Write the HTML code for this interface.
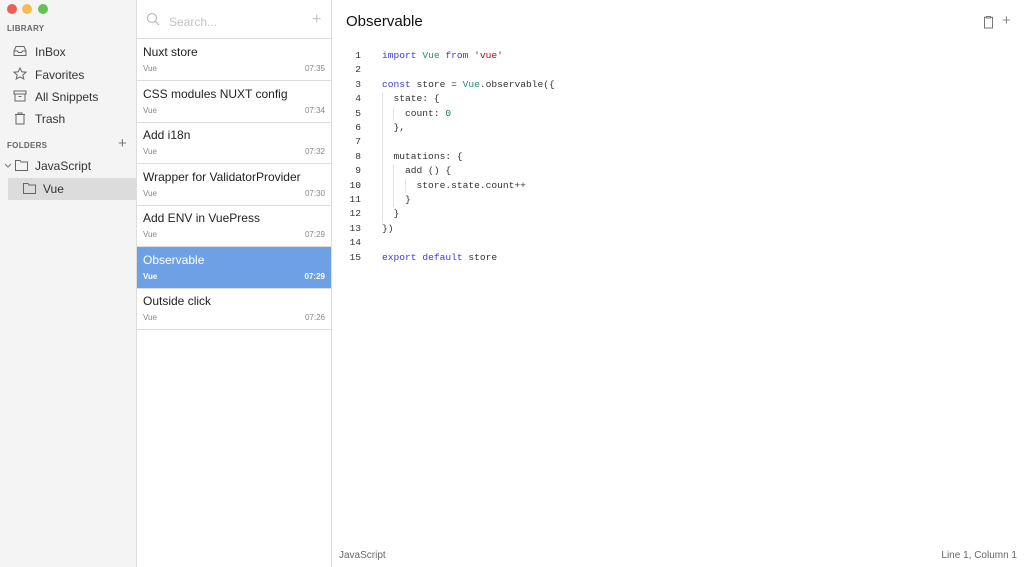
<!DOCTYPE html>
<html><head><meta charset="utf-8"><style>
*{margin:0;padding:0;box-sizing:border-box}
body{width:1024px;height:567px;overflow:hidden;font-family:"Liberation Sans",sans-serif;background:#fff;position:relative;color:#222}
.side{position:absolute;left:0;top:0;width:137px;height:567px;background:#f4f4f4;border-right:1px solid #ddd}
.dot{position:absolute;top:4px;width:10px;height:10px;border-radius:50%}
.lbl{position:absolute;left:7px;font-size:8px;font-weight:bold;color:#666;letter-spacing:.3px}
.nav{position:absolute;left:35px;font-size:12px;color:#333}
.ic{position:absolute;left:13px}
.list{position:absolute;left:137px;top:0;width:195px;height:567px;border-right:1px solid #ddd;background:#fff}
.row{position:absolute;left:0;width:194px;height:42px;border-bottom:1px solid #ddd}
.row .t{position:absolute;left:6px;top:6px;font-size:12px;color:#222}
.row .s{position:absolute;left:6px;top:25px;font-size:8px;color:#888}
.row .m{position:absolute;right:6px;top:25px;font-size:8px;color:#888}
.row.sel{background:#6ea0e5}
.row.sel .t,.row.sel .s,.row.sel .m{color:#fff}
.row.sel .s,.row.sel .m{font-weight:bold}
.code{position:absolute;left:340px;top:49px;font-family:"Liberation Mono",monospace;font-size:9.6px;line-height:14.4px;color:#333}
.ln{position:absolute;left:0;width:21px;text-align:right;color:#333}
.cl{position:absolute;left:42px;white-space:pre}
.k{color:#3a3ad0}.v{color:#2a8a7a}.s1{color:#a31515}.n{color:#1a7a4a}
.g{position:absolute;width:1px;background:#e4e4e4}
</style></head><body>
<div class="side">
<div class="dot" style="left:7px;background:#ec5f57"></div>
<div class="dot" style="left:22px;background:#f4bd4f"></div>
<div class="dot" style="left:38px;background:#5fc454"></div>
<div class="lbl" style="top:24px">LIBRARY</div>
<svg class="ic" style="top:45px" width="14" height="12" viewBox="0 0 14 12" fill="none" stroke="#666" stroke-width="1"><path d="M1 6 L3 1.5 H11 L13 6 V10.5 H1Z M1 6 H4.5 L5.5 7.5 H8.5 L9.5 6 H13"/></svg>
<div class="nav" style="top:45px">InBox</div>
<svg class="ic" style="top:67px" width="14" height="13" viewBox="0 0 14 13" fill="none" stroke="#666" stroke-width="1"><path d="M7 1 L8.8 4.8 L13 5.2 L9.8 8 L10.8 12 L7 9.9 L3.2 12 L4.2 8 L1 5.2 L5.2 4.8Z"/></svg>
<div class="nav" style="top:68px">Favorites</div>
<svg class="ic" style="top:90px" width="14" height="12" viewBox="0 0 14 12" fill="none" stroke="#666" stroke-width="1"><path d="M1 1H13V4H1Z M2 4V11H12V4 M5.5 6.5H8.5"/></svg>
<div class="nav" style="top:90px">All Snippets</div>
<svg class="ic" style="top:112px" width="14" height="13" viewBox="0 0 14 13" fill="none" stroke="#666" stroke-width="1"><path d="M2 2.5H12 M5 2.5V1H9V2.5 M3 2.5V12H11V2.5"/></svg>
<div class="nav" style="top:112px">Trash</div>
<div class="lbl" style="top:141px">FOLDERS</div>
<div style="position:absolute;left:118px;top:135px;font-size:15px;color:#777">+</div>
<svg style="position:absolute;left:4px;top:163px" width="8" height="6" viewBox="0 0 8 6" fill="none" stroke="#777"><path d="M1 1L4 4L7 1"/></svg>
<svg style="position:absolute;left:15px;top:160px" width="13" height="11" viewBox="0 0 13 11" fill="none" stroke="#666"><path d="M.5 .5H5L6 2H12.5V10.5H.5Z"/></svg>
<div class="nav" style="top:159px">JavaScript</div>
<div style="position:absolute;left:8px;top:178px;width:128px;height:22px;background:#dcdcdc"></div>
<svg style="position:absolute;left:23px;top:183px" width="13" height="11" viewBox="0 0 13 11" fill="none" stroke="#666"><path d="M.5 .5H5L6 2H12.5V10.5H.5Z"/></svg>
<div class="nav" style="top:182px;left:43px">Vue</div>
</div>
<div class="list">
<svg style="position:absolute;left:9px;top:12px" width="14" height="14" viewBox="0 0 14 14" fill="none" stroke="#bbb" stroke-width="1.2"><circle cx="6" cy="6" r="4.5"/><path d="M9.3 9.3L13 13"/></svg>
<div style="position:absolute;left:32px;top:15px;font-size:12px;color:#c4c4c4">Search...</div>
<div style="position:absolute;left:175px;top:11px;font-size:16px;color:#c4c4c4">+</div>
<div style="position:absolute;left:0;top:38px;width:194px;border-top:1px solid #ddd"></div>
<div class="row" style="top:39px"><div class="t">Nuxt store</div><div class="s">Vue</div><div class="m">07:35</div></div>
<div class="row" style="top:81px"><div class="t">CSS modules NUXT config</div><div class="s">Vue</div><div class="m">07:34</div></div>
<div class="row" style="top:122px"><div class="t">Add i18n</div><div class="s">Vue</div><div class="m">07:32</div></div>
<div class="row" style="top:164px"><div class="t">Wrapper for ValidatorProvider</div><div class="s">Vue</div><div class="m">07:30</div></div>
<div class="row" style="top:205px"><div class="t">Add ENV in VuePress</div><div class="s">Vue</div><div class="m">07:29</div></div>
<div class="row sel" style="top:247px"><div class="t">Observable</div><div class="s">Vue</div><div class="m">07:29</div></div>
<div class="row" style="top:288px"><div class="t">Outside click</div><div class="s">Vue</div><div class="m">07:26</div></div>
</div>
<div style="position:absolute;left:346px;top:13px;font-size:15px;color:#111">Observable</div>
<svg style="position:absolute;left:983px;top:15px" width="11" height="14" viewBox="0 0 11 14" fill="none" stroke="#777"><path d="M3.5 1.5H7.5V3H3.5Z M3.5 2.2H1.5V13H9.5V2.2H7.5"/></svg>
<div style="position:absolute;left:1002px;top:12px;font-size:15px;color:#888">+</div>
<div class="code">
<div class="g" style="left:42px;top:43px;height:130px"></div>
<div class="g" style="left:53px;top:58px;height:14px"></div>
<div class="g" style="left:53px;top:115px;height:43px"></div>
<div class="g" style="left:65px;top:130px;height:14px"></div>
<div class="ln" style="top:0">1</div><div class="cl" style="top:0"><span class="k">import</span> <span class="v">Vue</span> <span class="k">from</span> <span class="s1">'vue'</span></div>
<div class="ln" style="top:14.4px">2</div>
<div class="ln" style="top:28.8px">3</div><div class="cl" style="top:28.8px"><span class="k">const</span> store = <span class="v">Vue</span>.observable({</div>
<div class="ln" style="top:43.2px">4</div><div class="cl" style="top:43.2px">  state: {</div>
<div class="ln" style="top:57.6px">5</div><div class="cl" style="top:57.6px">    count: <span class="n">0</span></div>
<div class="ln" style="top:72px">6</div><div class="cl" style="top:72px">  },</div>
<div class="ln" style="top:86.4px">7</div>
<div class="ln" style="top:100.8px">8</div><div class="cl" style="top:100.8px">  mutations: {</div>
<div class="ln" style="top:115.2px">9</div><div class="cl" style="top:115.2px">    add () {</div>
<div class="ln" style="top:129.6px">10</div><div class="cl" style="top:129.6px">      store.state.count++</div>
<div class="ln" style="top:144px">11</div><div class="cl" style="top:144px">    }</div>
<div class="ln" style="top:158.4px">12</div><div class="cl" style="top:158.4px">  }</div>
<div class="ln" style="top:172.8px">13</div><div class="cl" style="top:172.8px">})</div>
<div class="ln" style="top:187.2px">14</div>
<div class="ln" style="top:201.6px">15</div><div class="cl" style="top:201.6px"><span class="k">export</span> <span class="k">default</span> store</div>
</div>
<div style="position:absolute;left:339px;top:550px;font-size:10px;color:#666">JavaScript</div>
<div style="position:absolute;right:7px;top:550px;font-size:10px;color:#666">Line 1, Column 1</div>
</body></html>
